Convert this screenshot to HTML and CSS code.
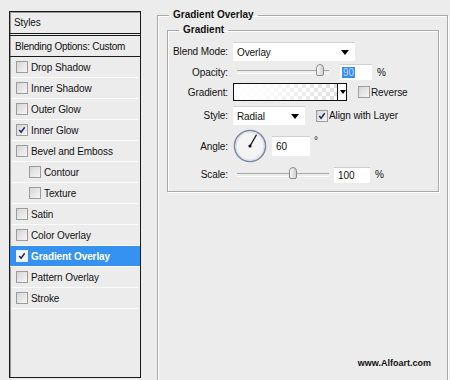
FILE: index.html
```html
<!DOCTYPE html>
<html lang="en">
<head>
    <meta charset="UTF-8">
    <title>Layer Style - Gradient Overlay</title>
    <link rel="stylesheet" href="styles.css">
</head>
<body>
<div class="dialog">
    <div class="styles-list">
        <div class="list-head">Styles</div>
        <div class="list-row blend">Blending Options: Custom</div>
        <div class="list-row"><span class="cb"></span>Drop Shadow</div>
        <div class="list-row"><span class="cb"></span>Inner Shadow</div>
        <div class="list-row"><span class="cb"></span>Outer Glow</div>
        <div class="list-row"><span class="cb on"><svg viewBox="0 0 11 11"><path d="M2.5 5.5 L4.5 8 L8.5 2.5" fill="none" stroke="#1c2a6a" stroke-width="1.6"/></svg></span>Inner Glow</div>
        <div class="list-row"><span class="cb"></span>Bevel and Emboss</div>
        <div class="list-row sub"><span class="cb"></span>Contour</div>
        <div class="list-row sub"><span class="cb"></span>Texture</div>
        <div class="list-row"><span class="cb"></span>Satin</div>
        <div class="list-row"><span class="cb"></span>Color Overlay</div>
        <div class="list-row active"><span class="cb on"><svg viewBox="0 0 11 11"><path d="M2.5 5.5 L4.5 8 L8.5 2.5" fill="none" stroke="#1c2a6a" stroke-width="1.6"/></svg></span>Gradient Overlay</div>
        <div class="list-row"><span class="cb"></span>Pattern Overlay</div>
        <div class="list-row"><span class="cb"></span>Stroke</div>
    </div>

    <div class="settings">
        <fieldset class="group outer">
            <legend>Gradient Overlay</legend>
            <fieldset class="group inner">
                <legend>Gradient</legend>
                <div class="form">
                    <label class="row-blend">Blend Mode:</label>
                    <div class="ctl row-blend">
                        <div class="select wide">Overlay<span class="arrow"></span></div>
                    </div>

                    <label class="row-opacity">Opacity:</label>
                    <div class="ctl row-opacity">
                        <div class="slider"><span class="thumb" style="left: 79px"></span></div>
                        <div class="num short"><span class="sel">90</span></div>
                        <span class="unit">%</span>
                    </div>

                    <label class="row-grad">Gradient:</label>
                    <div class="ctl row-grad">
                        <div class="grad-box"><span class="grad-fill"></span><span class="grad-arrow"><span class="arrow"></span></span></div>
                        <span class="cb"></span><span class="cb-text">Reverse</span>
                    </div>

                    <label class="row-style">Style:</label>
                    <div class="ctl row-style">
                        <div class="select narrow">Radial<span class="arrow"></span></div>
                        <span class="cb on"><svg viewBox="0 0 11 11"><path d="M2.5 5.5 L4.5 8 L8.5 2.5" fill="none" stroke="#1c2a6a" stroke-width="1.6"/></svg></span><span class="cb-text">Align with Layer</span>
                    </div>

                    <label class="row-angle">Angle:</label>
                    <div class="ctl row-angle">
                        <svg class="dial" width="34" height="34" viewBox="0 0 34 34">
                            <circle cx="17" cy="17" r="15.5" fill="#f4f4f4" stroke="#7d8aa6" stroke-width="1.6"/>
                            <circle cx="17" cy="17" r="14" fill="none" stroke="#d8dce6" stroke-width="1"/>
                            <line x1="17" y1="17" x2="23.5" y2="5.7" stroke="#111" stroke-width="1.3"/>
                            <circle cx="17" cy="17" r="1.6" fill="#111"/>
                        </svg>
                        <div class="num angle">60</div>
                        <span class="deg">&deg;</span>
                    </div>

                    <label class="row-scale">Scale:</label>
                    <div class="ctl row-scale">
                        <div class="slider"><span class="thumb" style="left: 52px"></span></div>
                        <div class="num mid">100</div>
                        <span class="unit">%</span>
                    </div>
                </div>
            </fieldset>
            <div class="credit">www.Alfoart.com</div>
        </fieldset>
    </div>
</div>
</body>
</html>
```

FILE: styles.css
```css
body {
    margin: 0;
    background: #ececec;
    font-family: "Liberation Sans", Arial, sans-serif;
    font-size: 10px;
    letter-spacing: -0.1px;
    color: #111;
    width: 450px;
    height: 380px;
    overflow: hidden;
}
.dialog {
    display: flex;
    padding: 11px 0 0 9px;
}

/* left list */
.styles-list {
    width: 130px;
    height: 365px;
    border: 1px solid #1a1a1a;
    box-shadow: inset 1px 1px 0 #9a9a9a;
    background: #ececec;
}
.list-head {
    height: 21px;
    line-height: 21px;
    padding-left: 4px;
    border-bottom: 3px double #1a1a1a;
}
.list-row {
    display: flex;
    align-items: center;
    height: 20px;
    border-bottom: 1px solid #fbfbfb;
    margin: 0 2px;
    padding-left: 4px;
    white-space: nowrap;
}
.list-row.blend {
    height: 20px;
    border-bottom: 1px solid #1a1a1a;
    margin: 0;
    padding-left: 5px;
    letter-spacing: -0.25px;
}
.list-row.sub {
    padding-left: 17px;
}
.list-row.active {
    background: #3592f0;
    color: #fff;
    font-weight: bold;
    margin: 0;
    padding-left: 6px;
}
.cb {
    display: inline-block;
    box-sizing: border-box;
    width: 12px;
    height: 12px;
    margin-right: 3px;
    border: 1px solid #9c9c9c;
    background: linear-gradient(135deg, #d6d6d6, #f6f6f6);
    flex: none;
}
.cb svg {
    display: block;
    width: 10px;
    height: 10px;
}
.active .cb {
    border-color: #e8eef8;
    background: #f4f4f4;
}

/* right side */
.settings {
    margin-left: 16px;
}
.group {
    margin: 0;
    border: 1px solid #a8a8a8;
    box-shadow: 1px 1px 0 #fff, inset 1px 1px 0 #fff;
}
.group legend {
    font-weight: bold;
    font-size: 10px;
    letter-spacing: 0;
    padding: 0 4px;
    line-height: 12px;
}
.outer {
    position: relative;
    box-sizing: border-box;
    width: 291px;
    height: 380px;
    padding: 0 8px 0 9px;
    border-bottom: none;
    margin-top: -2px;
}
.outer > legend {
    margin-left: 2px;
}
.inner {
    box-sizing: border-box;
    width: 272px;
    height: 168px;
    padding: 0 0 0 5px;
    margin-top: 3px;
}
.inner > legend {
    margin-left: 6px;
}
.form {
    display: grid;
    grid-template-columns: 55px 1fr;
    column-gap: 5px;
    grid-template-rows: 22px 20px 20px 27px 34px 23px;
    align-items: center;
    margin-top: 4px;
    white-space: nowrap;
}
.form label {
    text-align: right;
}
.ctl {
    display: flex;
    align-items: center;
}
.select {
    position: relative;
    height: 19px;
    line-height: 19px;
    background: #fff;
    box-sizing: border-box;
    padding-left: 4px;
    border-top: 1px solid #d4d4d4;
}
.select.wide {
    width: 122px;
}
.select.narrow {
    width: 72px;
    margin-right: 11px;
}
.arrow {
    position: absolute;
    right: 6px;
    top: 7px;
    border-left: 4px solid transparent;
    border-right: 4px solid transparent;
    border-top: 5px solid #000;
}
.slider {
    position: relative;
    width: 92px;
    height: 2px;
    margin: 0 12px 0 4px;
    border-top: 1px solid #a8a8a8;
    border-bottom: 1px solid #fff;
}
.thumb {
    position: absolute;
    top: -7px;
    width: 8px;
    height: 12px;
    box-sizing: border-box;
    border: 1px solid #8c8c8c;
    border-radius: 4px 4px 2px 2px;
    background: linear-gradient(90deg, #fafafa, #cfcfcf);
}
.num {
    box-sizing: border-box;
    height: 16px;
    line-height: 16px;
    background: #fff;
    padding-left: 4px;
    border-top: 1px solid #d0d0d0;
}
.num.short {
    width: 32px;
    margin-left: -1px;
    padding-left: 2px;
}
.num.mid {
    width: 36px;
    margin-left: -7px;
}
.num.angle {
    width: 38px;
    height: 20px;
    line-height: 20px;
    margin-left: 5px;
}
.sel {
    background: #3a8ef0;
    color: #b9dbff;
    padding: 0 1px;
}
.unit {
    margin-left: 5px;
}
.deg {
    margin-left: 4px;
    align-self: flex-start;
    margin-top: 6px;
}
.grad-box {
    position: relative;
    width: 114px;
    height: 18px;
    box-sizing: border-box;
    border: 1px solid #111;
    margin-right: 11px;
    background-color: #fff;
    background-image:
        linear-gradient(45deg, #dadada 25%, transparent 25%, transparent 75%, #dadada 75%),
        linear-gradient(45deg, #dadada 25%, transparent 25%, transparent 75%, #dadada 75%);
    background-size: 8px 8px;
    background-position: 0 0, 4px 4px;
}
.grad-fill {
    position: absolute;
    left: 0;
    top: 0;
    bottom: 0;
    right: 9px;
    background: linear-gradient(90deg, #fff 0%, rgba(255, 255, 255, 0.85) 35%, rgba(255, 255, 255, 0.15) 100%);
}
.grad-arrow {
    position: absolute;
    right: 0;
    top: 0;
    bottom: 0;
    width: 8px;
    background: #fff;
    border-left: 1px solid #111;
}
.grad-arrow .arrow {
    right: 0;
    top: 6px;
    border-left-width: 3px;
    border-right-width: 3px;
    border-top-width: 4px;
}
.cb-text {
    margin-left: -1px;
}
.row-grad .cb, .row-style .cb {
    margin-right: 2px;
}
.credit {
    position: absolute;
    right: 16px;
    bottom: 21px;
    font-weight: bold;
    font-size: 9px;
    letter-spacing: 0;
}
```
